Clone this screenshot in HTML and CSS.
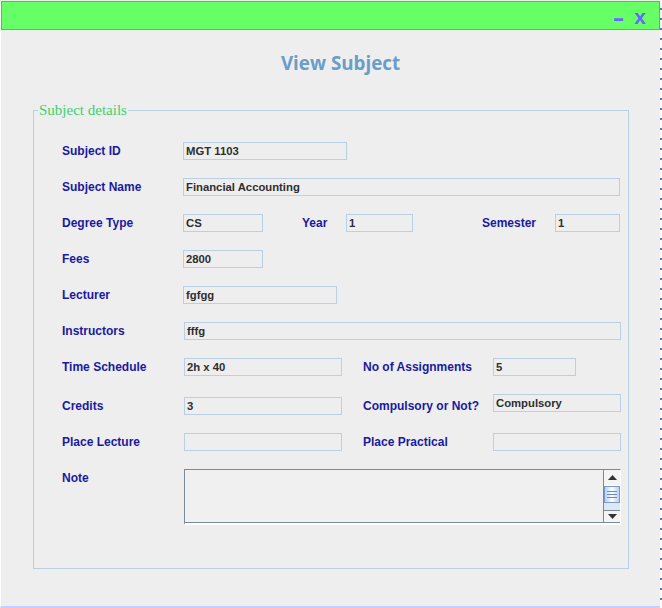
FILE: index.html
```html
<!DOCTYPE html>
<html>
<head>
<meta charset="utf-8">
<link rel="stylesheet" href="styles.css">
</head>
<body>
<div class="window">
  <div class="titlebar">
    <span class="ctl minus">-</span>
    <span class="ctl close">x</span>
  </div>
  <h1 class="heading">View Subject</h1>
  <div class="group">
    <span class="legend">Subject details</span>
    <div class="row">
      <span class="label lw1">Subject ID</span>
      <span class="field w164">MGT 1103</span>
    </div>
    <div class="row">
      <span class="label lw1">Subject Name</span>
      <span class="field w437">Financial Accounting</span>
    </div>
    <div class="row">
      <span class="label lw1">Degree Type</span>
      <span class="field w80">CS</span>
      <span class="label year">Year</span>
      <span class="field w67">1</span>
      <span class="label sem">Semester</span>
      <span class="field w65">1</span>
    </div>
    <div class="row">
      <span class="label lw1">Fees</span>
      <span class="field w80">2800</span>
    </div>
    <div class="row">
      <span class="label lw1">Lecturer</span>
      <span class="field w154">fgfgg</span>
    </div>
    <div class="row">
      <span class="label lw2">Instructors</span>
      <span class="field w437">fffg</span>
    </div>
    <div class="row">
      <span class="label lw2">Time Schedule</span>
      <span class="field w158">2h x 40</span>
      <span class="label rl">No of Assignments</span>
      <span class="field w83">5</span>
    </div>
    <div class="row gap3">
      <span class="label lw2">Credits</span>
      <span class="field w158">3</span>
      <span class="label rl">Compulsory or Not?</span>
      <span class="field w128 up">Compulsory</span>
    </div>
    <div class="row">
      <span class="label lw2">Place Lecture</span>
      <span class="field w158"></span>
      <span class="label rl">Place Practical</span>
      <span class="field w128"></span>
    </div>
    <div class="note-row">
      <span class="label lw2 note-label">Note</span>
      <div class="textarea">
        <div class="ta-body"></div>
        <div class="scrollbar">
          <div class="sb-btn"><svg width="9" height="5" viewBox="0 0 9 5"><path d="M0 5 L4.5 0 L9 5 Z" fill="#333"/></svg></div>
          <div class="sb-thumb"><i></i><i></i><i></i></div>
          <div class="sb-track"></div>
          <div class="sb-btn down"><svg width="9" height="5" viewBox="0 0 9 5"><path d="M0 0 L4.5 5 L9 0 Z" fill="#333"/></svg></div>
        </div>
      </div>
    </div>
  </div>
</div>
<div class="sidestrip"></div>
</body>
</html>
```
FILE: styles.css
```css
html, body {
  margin: 0;
  padding: 0;
}
body {
  background: #eeeeee;
  width: 662px;
  height: 608px;
  overflow: hidden;
  position: relative;
  font-family: "Liberation Sans", Arial, sans-serif;
}
.window {
  width: 659px;
  height: 605px;
  margin-top: 1px;
  background: #eeeeee;
  border-left: 1px solid #ffffff;
  border-bottom: 2px solid #ccccff;
}
.titlebar {
  height: 27px;
  background: #66ff66;
  border: 1px solid #4cc44c;
  display: flex;
  justify-content: flex-end;
  align-items: flex-end;
  padding-right: 13px;
  gap: 12px;
}
.ctl {
  color: #6666ff;
  font-weight: bold;
  font-size: 21px;
  line-height: 20px;
  font-family: "Liberation Sans", Arial, sans-serif;
}
.minus {
  font-size: 22px;
  transform: scaleX(1.6);
  margin-bottom: 1px;
}
.close {
  margin-bottom: 2px;
}
.heading {
  margin: 22px 0 0 0;
  height: 22px;
  line-height: 22px;
  text-align: center;
  font-family: "Open Sans", "DejaVu Sans", sans-serif;
  font-weight: bold;
  font-size: 18.8px;
  color: #6a9dc9;
  padding-left: 20px;
}
.group {
  position: relative;
  margin: 36px 0 0 32px;
  width: 596px;
  height: 459px;
  border: 1px solid #b8cfe6;
  padding: 22px 0 0 28px;
  box-sizing: border-box;
}
.legend {
  position: absolute;
  top: -9px;
  left: 4px;
  padding: 0 1px;
  background: #eeeeee;
  font-family: "Liberation Serif", "DejaVu Serif", serif;
  font-size: 15px;
  line-height: 16px;
  color: #3dd070;
}
.row {
  display: flex;
  align-items: center;
  height: 36px;
}
.row.gap3 {
  margin-top: 3px;
}
.label {
  font-size: 12px;
  font-weight: bold;
  color: #1a1aa0;
  flex: none;
}
.lw1 { width: 121px; }
.lw2 { width: 122px; }
.year { margin-left: 39px; width: 44px; }
.sem { margin-left: 69px; width: 73px; }
.rl { margin-left: 21px; width: 130px; }
.field {
  flex: none;
  height: 18px;
  box-sizing: border-box;
  border: 1px solid #b8cfe6;
  background: #eeeeee;
  font-size: 11.3px;
  font-weight: bold;
  color: #2e2e2e;
  line-height: 16px;
  padding-left: 2px;
}
.field.up { margin-top: -6px; }
.w164 { width: 164px; }
.w437 { width: 437px; }
.w80 { width: 80px; }
.w67 { width: 67px; }
.w65 { width: 65px; }
.w154 { width: 154px; }
.w158 { width: 158px; }
.w83 { width: 83px; }
.w128 { width: 128px; }
.note-row {
  display: flex;
  align-items: flex-start;
  margin-top: 9px;
}
.note-label {
  margin-top: 2px;
}
.textarea {
  width: 437px;
  height: 56px;
  box-sizing: border-box;
  border: 1px solid #7a8a99;
  border-right: 1px solid #ffffff;
  border-bottom: 2px solid #ffffff;
  box-shadow: inset 0 -1px 0 #7a8a99;
  background: #f0f0f0;
  display: flex;
}
.ta-body {
  flex: 1;
}
.scrollbar {
  width: 16px;
  display: flex;
  flex-direction: column;
  border-left: 1px solid #7a8a99;
  background: #eeeeee;
}
.sb-btn {
  height: 15px;
  display: flex;
  align-items: center;
  justify-content: center;
  background: #f4f4f4;
  border-bottom: 1px solid #ffffff;
}
.sb-btn.down {
  border-top: 1px solid #7a8a99;
  border-bottom: 1px solid #7a8a99;
  height: 11px;
}
.sb-thumb {
  height: 15px;
  border: 1px solid #7a9acc;
  background: linear-gradient(to right, #b8d0f0, #ffffff 50%, #b8d0f0);
  display: flex;
  flex-direction: column;
  justify-content: center;
  align-items: center;
  gap: 2px;
}
.sb-thumb i {
  display: block;
  width: 10px;
  height: 1px;
  background: #6a8ac0;
}
.sb-track {
  flex: 1;
  background: #dde8f6;
}
.sidestrip {
  position: absolute;
  right: 0;
  top: 0;
  width: 2px;
  height: 608px;
  background: repeating-linear-gradient(to bottom, #ffffff 0, #ffffff 8px, #5577bb 8px, #5577bb 10px);
}
```
